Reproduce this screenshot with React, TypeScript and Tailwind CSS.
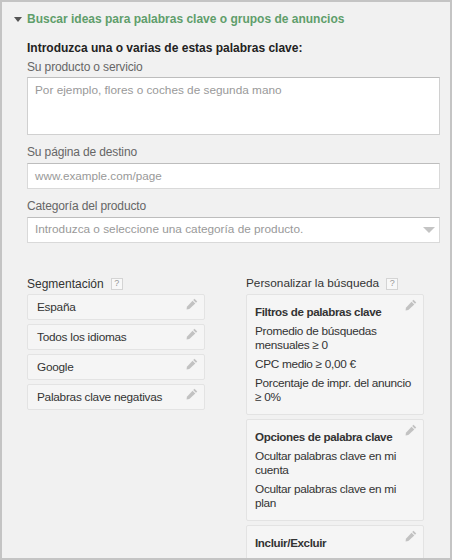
const Pencil = ({ top }: { top: string }) => (
  <svg width="12" height="12" viewBox="0 0 13 13" className={`absolute right-[6px] ${top}`}>
    <path d="M9.2 0.8 L12.2 3.8 L10.8 5.2 L7.8 2.2 Z" fill="#c2c2c2" />
    <path d="M7.1 2.9 L10.1 5.9 L3.6 12 L0.6 12.4 L1 9.4 Z" fill="#c2c2c2" />
  </svg>
);

const Help = () => (
  <span className="inline-flex items-center justify-center w-[12px] h-[12px] border border-[#d4d4d4] bg-[#f8f8f8] text-[9px] leading-none text-[#999]">?</span>
);

const Field = ({ label, children }: { label: string; children: React.ReactNode }) => (
  <div className="flex flex-col">
    <div className="text-[#666] text-[12px] tracking-[-0.14px] leading-[16px]">{label}</div>
    {children}
  </div>
);

const Chip = ({ text }: { text: string }) => (
  <div className="relative h-[26px] border border-[#e3e3e3] rounded-[2px] bg-[#f5f5f5] pl-[9px] pt-[2px] flex items-center text-[#333] text-[11.8px] tracking-[-0.25px]">
    {text}
    <Pencil top="top-[3px]" />
  </div>
);

const Card = ({ title, lines, h }: { title: string; lines: string[]; h: string }) => (
  <div className={`relative border border-[#e3e3e3] rounded-[2px] bg-[#f5f5f5] pl-[8px] pr-[4px] pt-[10px] ${h}`}>
    <div className="font-bold text-[#333] text-[11.6px] tracking-[-0.36px] leading-[14px] mb-[5px]">{title}</div>
    <div className="flex flex-col gap-[5px]">
      {lines.map((l) => (
        <div key={l} className="text-[#333] text-[11.8px] tracking-[-0.3px] leading-[14px]">{l}</div>
      ))}
    </div>
    <Pencil top="top-[4px]" />
  </div>
);

export default function App() {
  return (
    <div className="w-[452px] h-[560px] overflow-hidden bg-[#f1f1f1] border-2 border-[#c4c4c4] font-['Liberation_Sans',Arial,sans-serif] box-border">
      <div className="flex items-center h-[32px] mt-[1px] pl-[12px]">
        <svg width="8" height="5" viewBox="0 0 8 5" className="mr-[5px]"><path d="M0 0 L8 0 L4 5 Z" fill="#555" /></svg>
        <span className="font-bold text-[12px] text-[#5f9e6b]">Buscar ideas para palabras clave o grupos de anuncios</span>
      </div>
      <div className="pl-[25px] pr-[10px]">
        <div className="mt-[5px] font-bold text-[12px] leading-[16px] text-[#222]">Introduzca una o varias de estas palabras clave:</div>
        <div className="mt-[3px]">
          <Field label="Su producto o servicio">
            <div className="mt-[2px] h-[58px] bg-white border border-[#d0d0d0] border-t-[#bdbdbd] pl-[7px] pt-[4px] text-[11.8px] leading-[16px] text-[#999]">Por ejemplo, flores o coches de segunda mano</div>
          </Field>
        </div>
        <div className="mt-[9px]">
          <Field label="Su página de destino">
            <div className="mt-[3px] h-[26px] bg-white border border-[#d9d9d9] border-t-[#bdbdbd] pl-[7px] flex items-center text-[11.7px] text-[#999]">www.example.com/page</div>
          </Field>
        </div>
        <div className="mt-[9px]">
          <Field label="Categoría del producto">
            <div className="mt-[3px] h-[26px] bg-white border border-[#d9d9d9] border-t-[#bdbdbd] pl-[7px] pr-[4px] flex items-center justify-between text-[11.8px] text-[#999]">
              <span>Introduzca o seleccione una categoría de producto.</span>
              <svg width="12" height="6" viewBox="0 0 12 6"><path d="M0 0 L12 0 L6 6 Z" fill="#c4c4c4" /></svg>
            </div>
          </Field>
        </div>
        <div className="mt-[31px] flex">
          <div className="w-[178px] flex flex-col">
            <div className="h-[19px] flex items-center gap-[7px] text-[#333] text-[12px] mb-[1px]">Segmentación <Help /></div>
            <div className="flex flex-col gap-[4px]">
              <Chip text="España" />
              <Chip text="Todos los idiomas" />
              <Chip text="Google" />
              <Chip text="Palabras clave negativas" />
            </div>
          </div>
          <div className="ml-[41px] w-[178px] flex flex-col">
            <div className="h-[19px] flex items-center gap-[7px] text-[#333] text-[11.8px] mb-[1px]">Personalizar la búsqueda <Help /></div>
            <div className="flex flex-col gap-[4px]">
              <Card h="h-[121px]" title="Filtros de palabras clave" lines={["Promedio de búsquedas mensuales ≥ 0", "CPC medio ≥ 0,00 €", "Porcentaje de impr. del anuncio ≥ 0%"]} />
              <Card h="h-[102px]" title="Opciones de palabra clave" lines={["Ocultar palabras clave en mi cuenta", "Ocultar palabras clave en mi plan"]} />
              <Card h="h-[60px]" title="Incluir/Excluir" lines={[]} />
            </div>
          </div>
        </div>
      </div>
    </div>
  );
}
